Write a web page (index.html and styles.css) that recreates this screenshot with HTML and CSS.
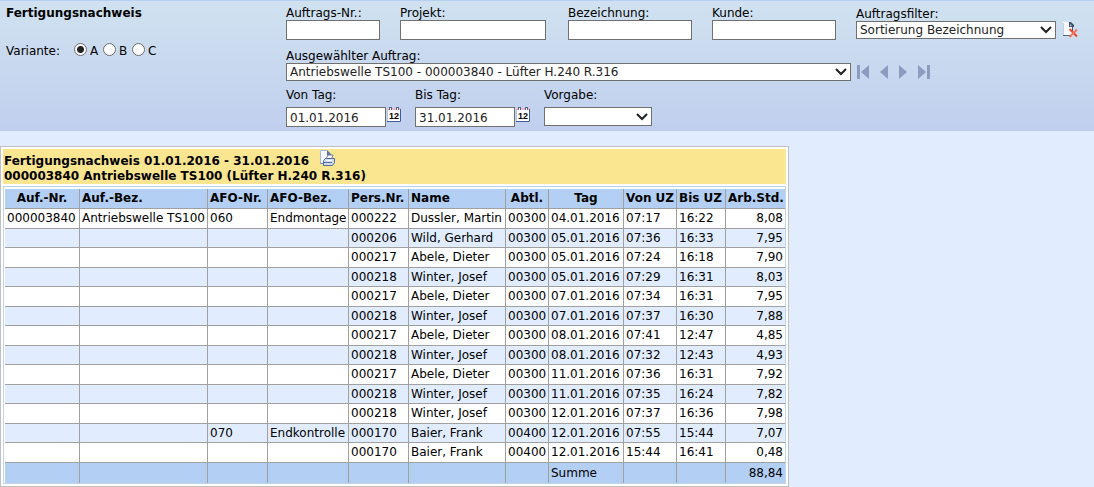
FILE: index.html
```html
<!DOCTYPE html>
<html lang="de">
<head>
<meta charset="utf-8">
<title>Fertigungsnachweis</title>
<link rel="stylesheet" href="styles.css">
</head>
<body>
<form class="filter">
  <div class="filter-side">
    <h1 class="filter-title">Fertigungsnachweis</h1>
    <div class="variants" role="radiogroup" aria-labelledby="variant-label">
      <span class="variants-label" id="variant-label">Variante:</span>
      <label class="variant"><input class="radio" type="radio" name="variant" checked><span>A</span></label>
      <label class="variant"><input class="radio" type="radio" name="variant"><span>B</span></label>
      <label class="variant"><input class="radio" type="radio" name="variant"><span>C</span></label>
    </div>
  </div>
  <div class="filter-main">
    <div class="row">
      <div class="field field-order"><label class="label" for="order">Auftrags-Nr.:</label><input class="box" id="order" type="text"></div>
      <div class="field field-project"><label class="label" for="project">Projekt:</label><input class="box" id="project" type="text"></div>
      <div class="field field-name"><label class="label" for="desc">Bezeichnung:</label><input class="box" id="desc" type="text"></div>
      <div class="field field-customer"><label class="label" for="customer">Kunde:</label><input class="box" id="customer" type="text"></div>
      <div class="field field-sort"><label class="label" for="sort">Auftragsfilter:</label>
        <div class="line">
          <select class="box select sort" id="sort"><option>Sortierung Bezeichnung</option></select>
          <button class="icon-button" type="button" aria-label="Filter löschen">
            <svg width="18" height="16" viewBox="0 0 18 16"><path d="M1 0h7l3 3v11H1z" fill="#fbfdff"/><path d="M1.500 1v12" stroke="#c3d2e8" fill="none"/><path d="M1 13.500h7" stroke="#52658c" fill="none"/><path d="M10.500 5v4" stroke="#46587c" fill="none"/><path d="M7 0h2l3 3v2H7z" fill="#3f506f"/><path d="M8 2l2 2H8z" fill="#c6d3e6"/><path d="M7.500 7L15 14.500" stroke="#f0452c" stroke-width="2" fill="none"/><path d="M15 7.500L7.500 15" stroke="#f4745e" stroke-width="2" fill="none"/></svg>
          </button>
        </div>
      </div>
    </div>
    <div class="field"><label class="label" for="selected">Ausgewählter Auftrag:</label>
      <div class="line">
        <select class="box select selected" id="selected"><option>Antriebswelle TS100 - 000003840 - Lüfter H.240 R.316</option></select>
        <div class="pager">
          <button class="icon-button" type="button" aria-label="Erster"><svg width="12" height="14" viewBox="0 0 12 14"><path d="M0 0h3v14H0zM12 0v14L4 7z" fill="#8b9cc0"/></svg></button>
          <button class="icon-button" type="button" aria-label="Zurück"><svg width="8" height="14" viewBox="0 0 8 14"><path d="M8 0v14L0 7z" fill="#8b9cc0"/></svg></button>
          <button class="icon-button" type="button" aria-label="Weiter"><svg width="8" height="14" viewBox="0 0 8 14"><path d="M0 0v14l8-7z" fill="#8b9cc0"/></svg></button>
          <button class="icon-button" type="button" aria-label="Letzter"><svg width="12" height="14" viewBox="0 0 12 14"><path d="M9 0h3v14H9zM0 0v14l8-7z" fill="#8b9cc0"/></svg></button>
        </div>
      </div>
    </div>
    <div class="row row-dates">
      <div class="field"><label class="label" for="from">Von Tag:</label>
        <div class="line line-date"><input class="box date" id="from" type="text" value="01.01.2016">
          <button class="icon-button" type="button" aria-label="Kalender Von Tag"><svg width="14" height="15" viewBox="0 0 14 15"><path d="M0 1h14v14H0z" fill="#fff"/><path d="M0 1h14v2H0z" fill="#efb3ca"/><path d="M.5 3v11" stroke="#b5c6e2" fill="none"/><path d="M0 14.500h13.500V2" stroke="#3f5c94" fill="none"/><path d="M2 0h3v3H2zM9 0h3v3H9z" fill="#56658a"/><path d="M3 1h1v2H3zM10 1h1v2h-1z" fill="#fff"/><text class="calendar-day" x="7" y="12">12</text></svg></button></div></div>
      <div class="field"><label class="label" for="to">Bis Tag:</label>
        <div class="line line-date"><input class="box date" id="to" type="text" value="31.01.2016">
          <button class="icon-button" type="button" aria-label="Kalender Bis Tag"><svg width="14" height="15" viewBox="0 0 14 15"><path d="M0 1h14v14H0z" fill="#fff"/><path d="M0 1h14v2H0z" fill="#efb3ca"/><path d="M.5 3v11" stroke="#b5c6e2" fill="none"/><path d="M0 14.500h13.500V2" stroke="#3f5c94" fill="none"/><path d="M2 0h3v3H2zM9 0h3v3H9z" fill="#56658a"/><path d="M3 1h1v2H3zM10 1h1v2h-1z" fill="#fff"/><text class="calendar-day" x="7" y="12">12</text></svg></button></div></div>
      <div class="field"><label class="label" for="preset">Vorgabe:</label>
        <div class="line line-date"><select class="box select preset" id="preset"><option></option></select></div></div>
    </div>
  </div>
</form>

<main class="report">
  <header class="report-head">
    <div class="report-line"><span>Fertigungsnachweis 01.01.2016 - 31.01.2016</span>
      <button class="icon-button print" type="button" aria-label="Drucken"><svg width="16" height="16" viewBox="0 0 16 16"><path d="M1 0h7l3 3v10H1z" fill="#f6f9fe"/><path d="M1.500 13V.5H8" stroke="#a9bad8" fill="none"/><path d="M1 13.500h4" stroke="#7a8db0"/><path d="M8 0l4 4v2H8z" fill="#61739a"/><path d="M7 9l2-4h5l-1.500 4z" fill="#fff" stroke="#6d80a6"/><path d="M4.500 10.500l2-2h9v4l-2 3h-9z" fill="#cfdbee" stroke="#566b95"/><path d="M5 12.500h8" stroke="#566b95"/><path d="M7 10.500h6" stroke="#fff"/></svg></button></div>
    <div>000003840 Antriebswelle TS100 (Lüfter H.240 R.316)</div>
  </header>
  <div class="table-frame">
  <table class="table">
    <colgroup><col class="w-no"><col class="w-desc"><col class="w-m"><col class="w-op"><col class="w-m"><col class="w-name"><col class="w-dept"><col class="w-no"><col class="w-from"><col class="w-to"><col></colgroup>
    <thead><tr><th class="mid">Auf.-Nr.</th><th>Auf.-Bez.</th><th>AFO-Nr.</th><th>AFO-Bez.</th><th>Pers.Nr.</th><th>Name</th><th class="mid">Abtl.</th><th class="mid">Tag</th><th>Von UZ</th><th>Bis UZ</th><th class="num">Arb.Std.</th></tr></thead>
    <tbody>
      <tr><td>000003840</td><td>Antriebswelle TS100</td><td>060</td><td>Endmontage</td><td>000222</td><td>Dussler, Martin</td><td>00300</td><td>04.01.2016</td><td>07:17</td><td>16:22</td><td class="num">8,08</td></tr>
      <tr><td></td><td></td><td></td><td></td><td>000206</td><td>Wild, Gerhard</td><td>00300</td><td>05.01.2016</td><td>07:36</td><td>16:33</td><td class="num">7,95</td></tr>
      <tr><td></td><td></td><td></td><td></td><td>000217</td><td>Abele, Dieter</td><td>00300</td><td>05.01.2016</td><td>07:24</td><td>16:18</td><td class="num">7,90</td></tr>
      <tr><td></td><td></td><td></td><td></td><td>000218</td><td>Winter, Josef</td><td>00300</td><td>05.01.2016</td><td>07:29</td><td>16:31</td><td class="num">8,03</td></tr>
      <tr><td></td><td></td><td></td><td></td><td>000217</td><td>Abele, Dieter</td><td>00300</td><td>07.01.2016</td><td>07:34</td><td>16:31</td><td class="num">7,95</td></tr>
      <tr><td></td><td></td><td></td><td></td><td>000218</td><td>Winter, Josef</td><td>00300</td><td>07.01.2016</td><td>07:37</td><td>16:30</td><td class="num">7,88</td></tr>
      <tr><td></td><td></td><td></td><td></td><td>000217</td><td>Abele, Dieter</td><td>00300</td><td>08.01.2016</td><td>07:41</td><td>12:47</td><td class="num">4,85</td></tr>
      <tr><td></td><td></td><td></td><td></td><td>000218</td><td>Winter, Josef</td><td>00300</td><td>08.01.2016</td><td>07:32</td><td>12:43</td><td class="num">4,93</td></tr>
      <tr><td></td><td></td><td></td><td></td><td>000217</td><td>Abele, Dieter</td><td>00300</td><td>11.01.2016</td><td>07:36</td><td>16:31</td><td class="num">7,92</td></tr>
      <tr><td></td><td></td><td></td><td></td><td>000218</td><td>Winter, Josef</td><td>00300</td><td>11.01.2016</td><td>07:35</td><td>16:24</td><td class="num">7,82</td></tr>
      <tr><td></td><td></td><td></td><td></td><td>000218</td><td>Winter, Josef</td><td>00300</td><td>12.01.2016</td><td>07:37</td><td>16:36</td><td class="num">7,98</td></tr>
      <tr><td></td><td></td><td>070</td><td>Endkontrolle</td><td>000170</td><td>Baier, Frank</td><td>00400</td><td>12.01.2016</td><td>07:55</td><td>15:44</td><td class="num">7,07</td></tr>
      <tr><td></td><td></td><td></td><td></td><td>000170</td><td>Baier, Frank</td><td>00400</td><td>12.01.2016</td><td>15:44</td><td>16:41</td><td class="num">0,48</td></tr>
    </tbody>
    <tfoot><tr><td></td><td></td><td></td><td></td><td></td><td></td><td></td><td>Summe</td><td></td><td></td><td class="num">88,84</td></tr></tfoot>
  </table>
  </div>
</main>
</body>
</html>
```

FILE: styles.css
```css
* { box-sizing: border-box; }

body {
  margin: 0;
  background: #e1edff;
  color: #000;
  font-family: Verdana, "DejaVu Sans", sans-serif;
  font-size: 12px;
  line-height: 15px;
}

svg { display: block; }

/* Filter bar */
.filter {
  display: flex;
  padding: 4px 0;
  border-top: 1px solid #b3cff4;
  background: linear-gradient(#d0e2f0, #c0cfee);
}
.filter-side { flex: 0 0 286px; padding-left: 6px; }
.filter-title { margin: 0; font-size: 12px; line-height: 16px; }
.variants { display: flex; align-items: center; margin-top: 22px; }
.variants-label { width: 68px; }
.variant { display: flex; align-items: center; gap: 3px; width: 29px; }
.radio {
  appearance: none;
  flex: none;
  width: 13px;
  height: 13px;
  margin: 0 0 3px;
  border: 1px solid #707070;
  border-radius: 50%;
  background: #fff;
}
.radio:checked { background: radial-gradient(circle, #222 3px, #fff 4px); }

.filter-main { display: flex; flex-direction: column; gap: 8px; }
.row { display: flex; gap: 20px; }
.row-dates { gap: 14px; margin-top: -2px; }
.field { display: flex; flex-direction: column; }
.label { height: 15px; line-height: 17px; }
.field-order { width: 94px; }
.field-project { width: 146px; margin-right: 2px; }
.field-name, .field-customer { width: 124px; }
.field-sort { padding-top: 1px; }
.line { display: flex; align-items: center; gap: 6px; }
.line-date { align-items: flex-start; gap: 1px; margin-top: 5px; }

.box {
  height: 20px;
  margin: 0;
  padding: 2px 3px 0;
  border: 1px solid #707070;
  border-radius: 0;
  background: #fff;
  color: #222;
  font: inherit;
}
.select {
  appearance: none;
  height: 18px;
  padding-top: 1px;
  background: #fff url("data:image/svg+xml,%3Csvg xmlns='http://www.w3.org/2000/svg' width='12' height='8'%3E%3Cpath d='M1 1l5 5 5-5' fill='none' stroke='%23222' stroke-width='2'/%3E%3C/svg%3E") no-repeat right 3px center;
}
.sort { width: 200px; }
.selected { width: 565px; }
.date { width: 100px; }
.preset { width: 108px; height: 19px; }

.icon-button { margin: 0; padding: 0; border: 0; background: none; }
.pager { display: flex; gap: 11px; }
.calendar-day { font: bold 9px "Liberation Sans", sans-serif; text-anchor: middle; }

/* Report */
.report {
  width: fit-content;
  margin-top: 15px;
  padding: 2px;
  border: 1px solid #c0c0c0;
  background: #fff;
}
.report-head {
  padding: 1px 1px 0;
  background: #fae591;
  font-weight: bold;
}
.report-line { display: flex; align-items: flex-end; gap: 10px; }
.print { margin-bottom: 3px; }
.table-frame {
  margin-top: 2px;
  padding: 2px 0 0 1px;
  border: 1px solid #c3d4e8;
}
.table {
  width: 780px;
  table-layout: fixed;
  border-collapse: separate;
  border-spacing: 0;
}
th, td {
  height: 20px;
  padding: 0 2px;
  border-right: 1px solid #a0a0a0;
  border-bottom: 1px solid #a0a0a0;
  text-align: left;
  line-height: 15px;
  white-space: nowrap;
}
th { background: #b3cff4; }
tr > :last-child { border-right: 0; }
tbody tr:nth-child(even) { background: #e1edff; }
tbody tr:nth-child(even) td { height: 19px; }
tfoot td { border-bottom: 0; background: #b3cff4; }
.mid { text-align: center; }
.table .num { text-align: right; }
.w-no { width: 75px; }
.w-desc { width: 128px; }
.w-m { width: 60px; }
.w-op { width: 81px; }
.w-name { width: 97px; }
.w-dept { width: 43px; }
.w-from { width: 53px; }
.w-to { width: 49px; }
```
